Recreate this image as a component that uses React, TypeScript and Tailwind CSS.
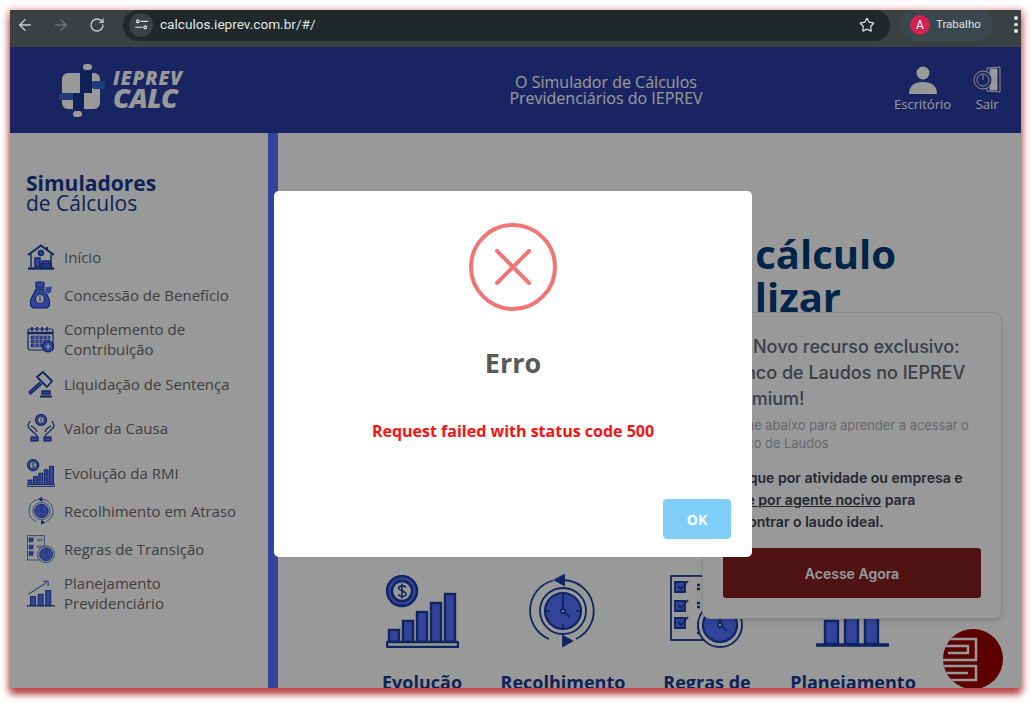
import { ArrowLeft, ArrowRight, RotateCw, Star } from 'lucide-react';

const NAVY = '#193ea0';
const BLUE = '#5571ff';

const IconHome = () => (
  <svg viewBox="0 0 28 26" className="w-[28px] h-[26px]" fill="none" stroke={NAVY} strokeWidth="1.4">
    <path d="M1 11 14 1.5 27 11" strokeWidth="2" />
    <path d="M20 3v4" strokeWidth="2" />
    <path d="M4 10v13M24 10v13" />
    <circle cx="14" cy="9" r="2.5" fill={BLUE} />
    <rect x="8" y="14" width="5" height="9" fill={BLUE} />
    <rect x="15" y="17" width="8" height="3" fill={BLUE} />
    <rect x="14" y="20" width="10" height="3" fill={BLUE} />
    <path d="M1 24.5h26" strokeWidth="2.4" />
  </svg>
);

const IconBag = () => (
  <svg viewBox="0 0 26 28" className="w-[26px] h-[28px]" fill="none" stroke={NAVY} strokeWidth="1.2">
    <rect x="8" y="1" width="8" height="6" rx="1" fill={BLUE} />
    <path d="M8 8h8l5 10c2 5 0 9-4 9H7c-4 0-6-4-4-9z" fill={BLUE} />
    <circle cx="12" cy="18" r="4.5" fill="#fff" />
    <path d="M12 15.5v5" strokeWidth="1" />
    <path d="M20 6l4-1.5V9c0 2-2 3.5-3.5 4C19 12.500 17 11 17 9V5z" fill={BLUE} stroke="#fff" strokeWidth="0.8" />
  </svg>
);

const IconCalendar = () => (
  <svg viewBox="0 0 28 28" className="w-[28px] h-[28px]" fill="none" stroke={NAVY} strokeWidth="1.2">
    <rect x="1" y="4" width="25" height="21" rx="2" fill="#fff" />
    <path d="M1 8h25" strokeWidth="2.5" />
    <path d="M5 2v4M10 2v4M15 2v4M20 2v4" strokeWidth="1.6" />
    <path d="M4 11h19v3H4zM4 15h19v3H4zM4 19h12v3H4z" fill={BLUE} strokeWidth="0.5" />
    <path d="M8 11v11M12 11v11M16 11v7M20 11v7" stroke="#fff" strokeWidth="0.8" />
    <circle cx="21" cy="21.500" r="5.500" fill={BLUE} />
    <path d="M21 19v5M18.500 21.500h5" stroke="#fff" />
  </svg>
);

const IconGavel = () => (
  <svg viewBox="0 0 28 28" className="w-[28px] h-[28px]" fill="none" stroke={NAVY} strokeWidth="1.3">
    <path d="M10 7 16 2l9 9-5 6z" fill="#fff" strokeWidth="1.800" />
    <path d="M13 12 2 22l1.500 2L15 14" fill={BLUE} />
    <path d="M15 21h8v3h-8z" fill={BLUE} />
    <path d="M13 26.500h12" strokeWidth="2" />
  </svg>
);

const IconHands = () => (
  <svg viewBox="0 0 28 28" className="w-[28px] h-[28px]" fill="none" stroke={NAVY} strokeWidth="1.200">
    <circle cx="14" cy="6" r="5.500" fill={BLUE} />
    <circle cx="14" cy="6" r="3.200" fill="#fff" strokeWidth="0.6" />
    <path d="M14 4.200v3.600" strokeWidth="0.8" />
    <path d="M3 7 1 11c0 3 3 5 5 7s4 2 4 5" />
    <path d="M25 7l2 4c0 3-3 5-5 7s-4 2-4 5" />
    <path d="M4 12c2 1 5 3 6 6M24 12c-2 1-5 3-6 6" />
    <rect x="4" y="23" width="7" height="4" fill={BLUE} />
    <rect x="17" y="23" width="7" height="4" fill={BLUE} />
  </svg>
);

const IconChart = ({ big }: { big?: boolean }) => (
  <svg viewBox="0 0 73 73" className={big ? 'w-[73px] h-[73px]' : 'w-[28px] h-[28px]'} fill="none" stroke={NAVY} strokeWidth="2.400">
    <circle cx="16" cy="16" r="15" fill={BLUE} />
    <circle cx="16" cy="16" r="10" fill="#fff" />
    <path d="M20 12.500c-1-2-7-2.500-7.500.5s7 2.500 7.500 6-6 3-8 .5M16 8.500v15" strokeWidth="1.600" />
    <rect x="3" y="55" width="10" height="12" fill={BLUE} />
    <rect x="17" y="46" width="10" height="21" fill={BLUE} />
    <rect x="31" y="37" width="10" height="30" fill={BLUE} />
    <rect x="45" y="28" width="10" height="39" fill={BLUE} />
    <rect x="59" y="19" width="10" height="48" fill={BLUE} />
    <rect x="1" y="67" width="71" height="5" rx="1" fill="#fff" />
  </svg>
);

const IconClock = ({ big }: { big?: boolean }) => (
  <svg viewBox="0 0 70 74" className={big ? 'w-[72px] h-[74px]' : 'w-[27px] h-[28px]'} fill="none" stroke={NAVY} strokeWidth="1.800">
    <path d="M25 6.500A31 31 0 0 0 21 65" />
    <path d="M34 6a31 31 0 0 1 14 59" />
    <path d="M36 1 27 6l9 5z" fill={NAVY} />
    <path d="M35 62l9 5-9 5z" fill={NAVY} />
    <circle cx="35" cy="37" r="23" fill="#fff" />
    <circle cx="35" cy="37" r="18" fill={BLUE} strokeWidth="2.200" />
    <path d="M35 20v4M35 50v4M18 37h4M48 37h4M35 22v15l7 6" />
    <circle cx="35" cy="37" r="2" fill="#fff" />
  </svg>
);

const IconRules = ({ big }: { big?: boolean }) => (
  <svg viewBox="0 0 73 74" className={big ? 'w-[73px] h-[74px]' : 'w-[28px] h-[28px]'} fill="none" stroke={NAVY} strokeWidth="1.800">
    <rect x="1" y="2" width="44" height="64" fill="#fff" />
    <path d="M5 8h10v10H5zM5 27h10v10H5zM5 44h10v10H5z" fill={BLUE} />
    <path d="M8 12l3 3 7-8M8 31l3 3 7-8M8 48l3 3 7-8" />
    <path d="M27 11h14M27 15h14M27 29h14M27 33h14M27 49h14M27 54h14M27 59h14" strokeWidth="2.400" strokeDasharray="3 2" />
    <circle cx="50" cy="51" r="22" fill="#fff" />
    <circle cx="50" cy="51" r="17" fill={BLUE} strokeWidth="2.200" />
    <path d="M50 39v12l7 6" />
    <circle cx="50" cy="51" r="2" fill="#fff" />
  </svg>
);

const IconPlan = ({ big }: { big?: boolean }) => (
  <svg viewBox="0 0 73 73" className={big ? 'w-[73px] h-[73px]' : 'w-[28px] h-[28px]'} fill="none" stroke={NAVY} strokeWidth="2.400">
    <path d="M3 40 50 10" />
    <path d="M42 6h13v13" />
    <rect x="9" y="46" width="13" height="23" fill={BLUE} />
    <rect x="29" y="40" width="13" height="29" fill={BLUE} />
    <rect x="49" y="30" width="13" height="39" fill={BLUE} />
    <path d="M1 70h71" strokeWidth="3.500" strokeLinecap="round" />
  </svg>
);

const menu = [
  { icon: <IconHome />, label: 'Início', h: 'h-[38px]' },
  { icon: <IconBag />, label: 'Concessão de Benefício', h: 'h-[38px]' },
  { icon: <IconCalendar />, label: 'Complemento de Contribuição', h: 'h-[51px] pb-[2px]' },
  { icon: <IconGavel />, label: 'Liquidação de Sentença', h: 'h-[38px]' },
  { icon: <IconHands />, label: 'Valor da Causa', h: 'h-[51px] pb-[2px]' },
  { icon: <IconChart />, label: 'Evolução da RMI', h: 'h-[38px]' },
  { icon: <IconClock />, label: 'Recolhimento em Atraso', h: 'h-[38px]' },
  { icon: <IconRules />, label: 'Regras de Transição', h: 'h-[38px]' },
  { icon: <IconPlan />, label: 'Planejamento Previdenciário', h: 'h-[51px] pb-[2px]' },
];

const Chrome = () => (
  <div className="h-[37px] bg-[#3b4042] flex items-start text-[#c9cccf] font-['Roboto',sans-serif]">
    <div className="w-[113px] h-[31px] flex items-center pl-[6px] pb-[2px] gap-[18px]">
      <ArrowLeft size={18} strokeWidth={1.8} />
      <ArrowRight size={18} strokeWidth={1.8} className="text-[#6f7477]" />
      <RotateCw size={16} strokeWidth={1.9} className="ml-[1px]" />
    </div>
    <div className="w-[767px] h-[31px] bg-[#202829] rounded-full flex items-center pl-[6px] pr-[15px] pb-[2px]">
      <div className="w-[24px] h-[24px] rounded-full bg-[#3b4042] flex items-center justify-center">
        <svg viewBox="0 0 14 12" className="w-[13px] h-[11px]" fill="none" stroke="#e3e5e6" strokeWidth="1.300">
          <circle cx="3" cy="2.500" r="1.500" />
          <path d="M6 2.500h8M0 9h8" />
          <circle cx="11" cy="9" r="1.500" />
        </svg>
      </div>
      <span className="ml-[7px] text-[13.6px] text-[#e3e6e8] flex-1">calculos.ieprev.com.br/#/</span>
      <Star size={16} strokeWidth={1.8} className="text-[#dfe1e3]" />
    </div>
    <div className="ml-[10px] w-[93px] h-[31px] rounded-full bg-[#3a474c] flex items-center pl-[10px] pb-[2px]">
      <div className="w-[20px] h-[20px] rounded-full bg-[#d0234f] text-white text-[12px] flex items-center justify-center">A</div>
      <span className="ml-[6px] text-[11.5px] text-[#dfe3e5]">Trabalho</span>
    </div>
    <div className="ml-[21px] h-[31px] flex flex-col items-center justify-center gap-[3px] pb-[2px]">
      <div className="w-[3.500px] h-[3.500px] rounded-full bg-[#dfe1e3]" />
      <div className="w-[3.500px] h-[3.500px] rounded-full bg-[#dfe1e3]" />
      <div className="w-[3.500px] h-[3.500px] rounded-full bg-[#dfe1e3]" />
    </div>
  </div>
);

const Logo = () => (
  <div className="flex items-center pl-[49px]">
    <svg viewBox="0 0 46 53" className="w-[46px] h-[53px]">
      <rect x="3" y="9" width="38" height="36" rx="6" fill="#fff" />
      <rect x="24" y="0" width="9" height="6" rx="3" fill="#fff" />
      <rect x="14" y="47" width="9" height="6" rx="3" fill="#fff" />
      <rect x="33" y="17" width="13" height="8" rx="2" fill="#3366cc" />
      <rect x="0" y="29" width="16" height="7" rx="3" fill="#3366cc" />
      <rect x="21" y="7" width="12" height="22" fill="#163893" />
      <rect x="14" y="29" width="11" height="16" fill="#163893" />
    </svg>
    <div className="ml-[8px] -mt-[3px] italic font-black text-white font-['Open_Sans',sans-serif]">
      <div className="text-[19px] tracking-[1px] leading-[17px]">IEPREV</div>
      <div className="text-[27px] tracking-[-0.5px] leading-[21px]">CALC</div>
    </div>
  </div>
);

const Header = () => (
  <header className="h-[86px] bg-[#2b3ea3] flex items-center text-white font-['Open_Sans',sans-serif]">
    <div className="w-[308px]">
      <Logo />
    </div>
    <div className="w-[576px] text-center text-[16px] leading-[16px]">
      <div>O Simulador de Cálculos</div>
      <div>Previdenciários do IEPREV</div>
    </div>
    <div className="flex gap-[22px] text-[13px] items-end">
      <div className="flex flex-col items-center">
        <svg viewBox="0 0 28 28" className="w-[28px] h-[28px]" fill="#fff">
          <circle cx="14" cy="7" r="6.500" />
          <path d="M0 28c0-8 5-12 14-12s14 4 14 12z" />
        </svg>
        <span className="mt-[1px]">Escritório</span>
      </div>
      <div className="flex flex-col items-center">
        <svg viewBox="0 0 28 28" className="w-[28px] h-[28px]" fill="none" stroke="#fff" strokeWidth="0.900">
          <path d="M14 2 27 1v25l-13-1z" />
          <path d="M17 3h7v21h-7z" fill="#fff" />
          <circle cx="10" cy="14" r="9" fill="#2b3ea3" />
          <circle cx="10" cy="14" r="6" />
          <path d="M10 9v5" />
          <circle cx="22" cy="14" r="1" fill="#2b3ea3" />
        </svg>
        <span className="mt-[1px]">Sair</span>
      </div>
    </div>
  </header>
);

const Sidebar = () => (
  <aside className="w-[258px] bg-white pt-[40px] pl-[16px] font-['Open_Sans',sans-serif]">
    <div className="text-[21px] leading-[20px] text-[#193a8f]">
      <div className="font-bold">Simuladores</div>
      <div>de Cálculos</div>
    </div>
    <nav className="mt-[25px] ml-[1px]">
      {menu.map((item) => (
        <div key={item.label} className={`${item.h} flex items-center`}>
          <div className="w-[28px] flex justify-center shrink-0">{item.icon}</div>
          <span className="ml-[9px] w-[176px] text-[15px] leading-[20px] text-[#6a6a6a]">{item.label}</span>
        </div>
      ))}
    </nav>
  </aside>
);

const shortcuts = [
  { icon: <IconChart big />, label: 'Evolução' },
  { icon: <IconClock big />, label: 'Recolhimento' },
  { icon: <IconRules big />, label: 'Regras de' },
  { icon: <IconPlan big />, label: 'Planejamento' },
];

const Main = () => (
  <main className="flex-1 bg-white pt-[99px] font-['Open_Sans',sans-serif] overflow-hidden">
    <div className="w-[618px] text-right text-[40px] leading-[43px] font-bold text-[#033e7b]">
      <div>Selecione o cálculo</div>
      <div className="pr-[55px]">que deseja realizar</div>
    </div>
    <div className="mt-[256px] ml-[74px] grid grid-cols-[140px_142px_146px_146px] justify-items-center">
      {shortcuts.map((s) => (
        <div key={s.label} className="flex flex-col items-center">
          <div className="h-[74px] flex items-end">{s.icon}</div>
          <div className="mt-[22px] text-[18px] leading-[24px] font-bold text-[#193a8f] whitespace-nowrap">{s.label}</div>
        </div>
      ))}
    </div>
  </main>
);

const PromoCard = () => (
  <div className="absolute left-[692px] top-[265px] w-[300px] h-[307px] bg-white rounded-[8px] border border-[#e5e7eb] shadow-md px-[20px] pt-[21px] font-['Inter',sans-serif]">
    <div className="text-[18px] leading-[26px] text-[#616976] font-medium">
      <span className="inline-block w-[30px]" />
      Novo recurso exclusivo: Banco de Laudos no IEPREV Premium!
    </div>
    <p className="mt-[5px] text-[12.9px] leading-[18px] text-[#a9aeb6]">Clique abaixo para aprender a acessar o Banco de Laudos</p>
    <p className="mt-[14px] text-[14.1px] leading-[22px] font-semibold text-[#3e444e]">
      Busque por atividade ou empresa e <span className="underline">filtre por agente nocivo</span> para encontrar o laudo ideal.
    </p>
    <button className="mt-[15px] w-[258px] h-[50px] bg-[#842121] rounded-[3px] text-white text-[14px] font-semibold">Acesse Agora</button>
  </div>
);

const ChatBubble = () => (
  <div className="absolute left-[933px] top-[582px] w-[60px] h-[60px] rounded-full bg-[#990000] overflow-hidden">
    <svg viewBox="0 0 60 60" className="w-full h-full" fill="none" stroke="#fff" strokeWidth="2.500">
      <path d="M0 10h33v21H0M0 17h25v7H5" />
      <path d="M0 37h33v14H0M0 44h25" />
    </svg>
  </div>
);

const ErrorModal = () => (
  <div className="absolute left-[264px] top-[144px] w-[478px] h-[366px] bg-white rounded-[5px] flex flex-col items-center font-['Open_Sans',sans-serif]">
    <div className="mt-[32px] w-[88px] h-[88px] rounded-full border-[4px] border-[#f27474] flex items-center justify-center">
      <svg viewBox="0 0 36 36" className="w-[36px] h-[36px]" stroke="#f27474" strokeWidth="4" strokeLinecap="round">
        <path d="M2 2 34 34M34 2 2 34" />
      </svg>
    </div>
    <h2 className="mt-[32px] text-[27px] leading-[40px] font-bold text-[#595959]">Erro</h2>
    <p className="mt-[36px] text-[16px] leading-[24px] font-bold text-[#ff1010]">Request failed with status code 500</p>
    <button className="mt-auto mb-[18px] self-end mr-[21px] w-[68px] h-[40px] rounded-[4px] bg-[#7fcff9] text-white text-[14px] font-bold">OK</button>
  </div>
);

export default function App() {
  return (
    <div className="w-[1031px] h-[703px] bg-white p-[10px] pb-[15px] overflow-hidden">
      <div className="h-[678px] w-[1011px] flex flex-col shadow-[0_2px_7px_2px_rgba(200,60,60,0.6),0_7px_7px_-1px_rgba(150,20,20,0.75)]">
        <Chrome />
        <div className="relative flex-1 flex flex-col overflow-hidden">
          <Header />
          <div className="flex flex-1 min-h-0">
            <Sidebar />
            <div className="w-[10px] bg-[#5571ff]" />
            <Main />
          </div>
          <PromoCard />
          <ChatBubble />
          <div className="absolute inset-0 bg-black/40" />
          <ErrorModal />
        </div>
      </div>
    </div>
  );
}
